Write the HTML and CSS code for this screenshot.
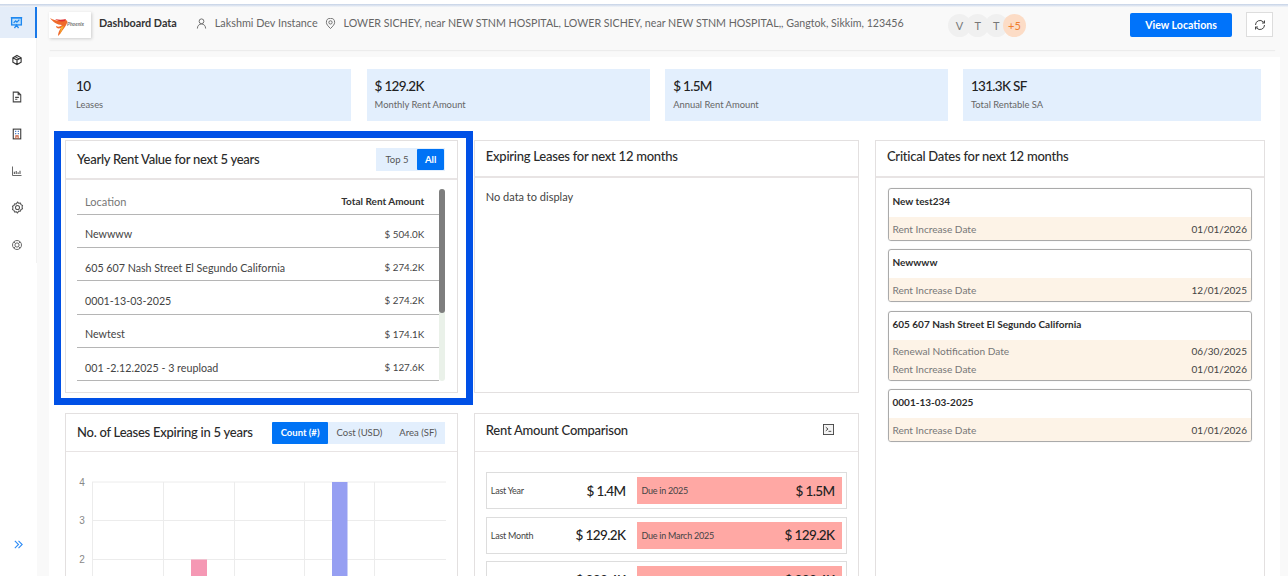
FILE: index.html
```html
<!DOCTYPE html>
<html lang="en">
<head>
<meta charset="utf-8">
<title>Dashboard Data</title>
<link rel="stylesheet" href="styles.css">
</head>
<body>
<div class="app">
  <nav class="sidebar">
    <div class="nav-list">
      <a class="nav-item active"><svg class="ico" viewBox="0 0 16 16" fill="none" stroke="#1e88f0" stroke-width="1.6"><path d="M1 2h14"/><rect x="2" y="2.5" width="12" height="8.5" fill="#bfe0fb"/><path d="M4.5 8.5l2.5-2.5 1.5 1.5 3-3M5.5 15l2.5-4 2.5 4"/></svg></a>
      <a class="nav-item"><svg class="ico" viewBox="0 0 16 16" fill="none" stroke="#333" stroke-width="1.5"><path d="M8 2l5.5 3v6L8 14l-5.5-3V5zM2.5 5L8 8l5.5-3M8 8v6"/><path d="M5.2 3.5l5.6 3" /></svg></a>
      <a class="nav-item"><svg class="ico" viewBox="0 0 16 16" fill="none" stroke="#444" stroke-width="1.4"><path d="M3 1.5h6.5l3.5 3.5v9.500H3zM9.500 1.500V5H13M5.500 8.500h5M5.500 11h3"/></svg></a>
      <a class="nav-item"><svg class="ico" viewBox="0 0 16 16" fill="none" stroke="#333" stroke-width="1.4"><rect x="3" y="1.500" width="10" height="13"/><path d="M5.500 4.500h1.500M9 4.500h1.500M5.500 7.500h1.500M9 7.500h1.500" stroke="#3a6fc0"/><path d="M6.500 14.500v-4h3v4" stroke="#c05a3a"/></svg></a>
      <a class="nav-item"><svg class="ico" viewBox="0 0 16 16" fill="none" stroke="#666" stroke-width="1.300"><path d="M2 2v12h12"/><path d="M4.500 12V9M7 12V8M9.500 12V9.500M12 12V7.500" stroke-width="1.600"/></svg></a>
      <a class="nav-item"><svg class="ico gear" viewBox="0 0 16 16" fill="none" stroke="#555" stroke-width="1.300" stroke-linejoin="round"><path d="M8 1.200l1.500 1.600 2.100-.3.700 2 1.900 1-.6 2 .6 2-1.900 1-.7 2-2.100-.3L8 14.800l-1.500-1.600-2.100.3-.7-2-1.900-1 .6-2-.6-2 1.900-1 .7-2 2.100.3z"/><circle cx="8" cy="8" r="2.500"/></svg></a>
      <a class="nav-item"><svg class="ico" viewBox="0 0 16 16" fill="none" stroke="#666" stroke-width="1.300"><circle cx="8" cy="8" r="6"/><circle cx="8" cy="8" r="2.800"/><path d="M3.800 3.800l2.200 2.200M12.200 3.800L10 6M3.800 12.200L6 10M12.200 12.200L10 10"/></svg></a>
    </div>
    <a class="nav-expand"><svg viewBox="0 0 12 12" fill="none" stroke="#2f8cf5" stroke-width="1.200"><path d="M2 2l4 4-4 4M6 2l4 4-4 4"/></svg></a>
  </nav>

  <div class="main">
    <header class="topbar">
      <div class="logo"><svg viewBox="0 0 42 26"><path d="M1 6c5 3 9 3 15 2 2 0 3 1 2 3-1 3-3 5-5 8-1 2-2 3-4 5 0-3 1-5 3-8-3 1-5 0-5-2 2 1 4 1 6-1-5 0-9-3-12-7z" fill="#ef6a2a"/><path d="M6 7c4 1 7 1 11 0l-1 2c-4 1-7 0-10-2z" fill="#e0312f"/><path d="M12 15l3-1-4 8z" fill="#f5b52e"/><text x="18" y="14" class="logo-text">Phoenix</text></svg></div>
      <h1 class="page-title">Dashboard Data</h1>
      <svg class="meta-ico first" viewBox="0 0 12 12" fill="none" stroke="#666" stroke-width="1"><circle cx="6" cy="3.600" r="2.600"/><path d="M1.500 11.500c0-3 2-5 4.500-5s4.500 2 4.500 5"/></svg>
      <span class="meta-text">Lakshmi Dev Instance</span>
      <svg class="meta-ico second" viewBox="0 0 12 12" fill="none" stroke="#666" stroke-width="1"><path d="M6 11.500C3.500 9 1.500 7 1.500 4.800a4.500 4.500 0 0 1 9 0C10.500 7 8.500 9 6 11.500z"/><circle cx="6" cy="4.800" r="1.800"/></svg>
      <span class="meta-text address">LOWER SICHEY, near NEW STNM HOSPITAL, LOWER SICHEY, near NEW STNM HOSPITAL,, Gangtok, Sikkim, 123456</span>
      <div class="avatars">
        <span class="avatar">V</span><span class="avatar">T</span><span class="avatar">T</span><span class="avatar more">+5</span>
      </div>
      <button class="primary-btn">View Locations</button>
      <button class="refresh-btn"><svg viewBox="0 0 12 12" fill="none" stroke="#444" stroke-width="1"><path d="M1.500 6a4.500 4.500 0 0 1 7.700-3.200L10.500 4M10.500 6a4.500 4.500 0 0 1-7.700 3.200L1.500 8"/><path d="M10.500 1.500V4H8M1.500 10.500V8H4"/></svg></button>
    </header>

    <section class="panel">
      <div class="kpis">
        <div class="kpi"><strong>10</strong><span>Leases</span></div>
        <div class="kpi"><strong>$ 129.2K</strong><span>Monthly Rent Amount</span></div>
        <div class="kpi"><strong>$ 1.5M</strong><span>Annual Rent Amount</span></div>
        <div class="kpi"><strong>131.3K SF</strong><span>Total Rentable SA</span></div>
      </div>

      <div class="grid">
        <article class="card rent-card">
          <div class="card-head tall">
            <h2>Yearly Rent Value for next 5 years</h2>
            <div class="toggle small"><span>Top 5</span><span class="on">All</span></div>
          </div>
          <div class="rent-body">
            <div class="rent-table">
              <div class="rent-row head"><span>Location</span><b>Total Rent Amount</b></div>
              <div class="rent-row"><span>Newwww</span><em>$ 504.0K</em></div>
              <div class="rent-row"><span>605 607 Nash Street El Segundo California</span><em>$ 274.2K</em></div>
              <div class="rent-row"><span>0001-13-03-2025</span><em>$ 274.2K</em></div>
              <div class="rent-row"><span>Newtest</span><em>$ 174.1K</em></div>
              <div class="rent-row"><span>001 -2.12.2025 - 3 reupload</span><em>$ 127.6K</em></div>
            </div>
            <div class="scroll"><div class="thumb"></div></div>
          </div>
        </article>

        <article class="card expiring-card">
          <div class="card-head raised"><h2>Expiring Leases for next 12 months</h2></div>
          <p class="empty">No data to display</p>
        </article>

        <article class="card dates-card">
          <div class="card-head raised"><h2>Critical Dates for next 12 months</h2></div>
          <div class="dates">
            <div class="date-item">
              <h3>New test234</h3>
              <div class="date-band"><div class="date-line"><span>Rent Increase Date</span><time>01/01/2026</time></div></div>
            </div>
            <div class="date-item">
              <h3>Newwww</h3>
              <div class="date-band"><div class="date-line"><span>Rent Increase Date</span><time>12/01/2025</time></div></div>
            </div>
            <div class="date-item">
              <h3>605 607 Nash Street El Segundo California</h3>
              <div class="date-band"><div class="date-line"><span>Renewal Notification Date</span><time>06/30/2025</time></div><div class="date-line"><span>Rent Increase Date</span><time>01/01/2026</time></div></div>
            </div>
            <div class="date-item">
              <h3>0001-13-03-2025</h3>
              <div class="date-band"><div class="date-line"><span>Rent Increase Date</span><time>01/01/2026</time></div></div>
            </div>
          </div>
        </article>

        <article class="card chart-card">
          <div class="card-head tall2">
            <h2>No. of Leases Expiring in 5 years</h2>
            <div class="toggle"><span class="on">Count (#)</span><span>Cost (USD)</span><span>Area (SF)</span></div>
          </div>
          <svg class="chart" viewBox="0 0 392 160" width="392" height="160">
            <g stroke="#ececec" stroke-width="1">
              <path d="M26 30H380M26 68.500H380M26 107.500H380M26 146H380"/>
              <path d="M26.500 30V160M97.500 30V160M168.500 30V160M238.500 30V160M308.500 30V160"/>
            </g>
            <rect x="125" y="107.500" width="16" height="53" fill="#f598b4"/>
            <rect x="266" y="30" width="15.500" height="130" fill="#969ff2"/>
            <g class="axis"><text x="16" y="34">4</text><text x="16" y="72">3</text><text x="16" y="111">2</text></g>
          </svg>
        </article>

        <article class="card compare-card">
          <div class="card-head tall3">
            <h2>Rent Amount Comparison</h2>
            <svg class="term" viewBox="0 0 12 12" fill="none" stroke="#444" stroke-width="1"><rect x=".5" y=".5" width="11" height="11" fill="#f4f4f4"/><path d="M3 3.500L5.500 5.500 3 7.500M6 8h3"/></svg>
          </div>
          <div class="compare-list">
            <div class="compare-row"><span class="cmp-label">Last Year</span><strong>$ 1.4M</strong><div class="due"><span>Due in 2025</span><strong>$ 1.5M</strong></div></div>
            <div class="compare-row"><span class="cmp-label">Last Month</span><strong>$ 129.2K</strong><div class="due"><span>Due in March 2025</span><strong>$ 129.2K</strong></div></div>
            <div class="compare-row"><span class="cmp-label">Last Week</span><strong>$ 333.4K</strong><div class="due"><span>Due this week</span><strong>$ 333.4K</strong></div></div>
          </div>
        </article>
      </div>
    </section>
  </div>
</div>
</body>
</html>
```
FILE: styles.css
```css
* { box-sizing: border-box; }
html, body { margin: 0; height: 576px; overflow: hidden; }
body { font-family: Lato, "Liberation Sans", sans-serif; background: #fff; color: #2b2b2b; }

.app { display: flex; height: 576px; padding-top: 4px; }
.app::before { content: ""; position: absolute; left: 0; right: 0; top: 4px; height: 3px; background: linear-gradient(#c5d2e6, #f3f5f9); z-index: 2; }

.sidebar { width: 37px; flex: none; background: #fff; display: flex; flex-direction: column; padding-top: 3px; position: relative; }
.nav-list { display: flex; flex-direction: column; border-right: 1px solid #f2f2f2; height: 256px; }
.nav-item { height: 37px; flex: none; display: flex; align-items: center; justify-content: center; padding-right: 2px; }
.nav-item.active { height: 31px; background: #e4edf9; border-right: 2px solid #1878e8; margin-right: -1px; margin-bottom: 3px; }
.ico { width: 12px; height: 12px; }
.ico.gear { width: 13px; height: 13px; }
.nav-item:first-child .ico { width: 13px; height: 13px; }
.nav-expand { margin-top: auto; margin-bottom: 25px; padding-left: 13px; height: 12px; display: block; }
.nav-expand svg { width: 11px; height: 11px; display: block; }

.main { flex: 1; min-width: 0; background: #f9f9f9; display: flex; flex-direction: column; padding-left: 12px; padding-right: 8px; }

.topbar { height: 46px; flex: none; display: flex; align-items: flex-start; padding-top: 8px; margin-right: 4px; box-shadow: 0 2px 1px -1px #ececec; background: #f9f9f9; position: relative; }
.logo { width: 42px; height: 26px; background: #fff; box-shadow: 1px 1px 3px #ccc; flex: none; }
.logo svg { display: block; width: 42px; height: 26px; }
.logo-text { font: italic 700 5px Lato, sans-serif; fill: #777; }
.page-title { margin: 3px 0 0 8px; font-size: 10.800px; line-height: 16px; font-weight: 700; color: #333; white-space: nowrap; }
.meta-ico { width: 11px; height: 11px; margin-top: 6px; flex: none; }
.meta-ico.first { margin-left: 19px; margin-right: 8px; }
.meta-ico.second { margin-left: 7px; margin-right: 8px; }
.meta-text { font-size: 10.800px; line-height: 16px; margin-top: 3px; color: #666; white-space: nowrap; }
.meta-text.address { font-size: 10.650px; }
.avatars { position: absolute; left: 899px; top: 10px; display: flex; }
.avatar { width: 23px; height: 23px; border-radius: 50%; background: #f0f0f0; color: #777; font-size: 11px; line-height: 23px; text-align: center; margin-right: -4.700px; }
.avatar.more { background: #fcdcc6; color: #ef7d2e; }
.primary-btn { position: absolute; left: 1081px; top: 9px; width: 102px; height: 24px; border: 0; border-radius: 2px; background: #0073fa; color: #fff; font: 700 10.600px Lato, sans-serif; padding: 0; }
.refresh-btn { position: absolute; left: 1197px; top: 8px; width: 27px; height: 25px; background: #fff; border: 1px solid #ddd; padding: 0; display: flex; align-items: center; justify-content: center; }
.refresh-btn svg { width: 12px; height: 12px; }

.panel { flex: 1; background: #fff; padding: 12px 16px 0 16px; margin-top: 7px; min-height: 0; overflow: hidden; }

.kpis { display: grid; grid-template-columns: 283.300px 283.300px 282.500px 298px; column-gap: 15.300px; padding-left: 3px; }
.kpi { height: 52px; background: #e3effd; padding: 9px 8px 0; display: flex; flex-direction: column; }
.kpi strong { font-size: 13.500px; line-height: 17px; font-weight: 500; letter-spacing: -.7px; color: #222; }
.kpi span { font-size: 9.400px; line-height: 12px; margin-top: 4px; color: #666; }

.grid { display: grid; grid-template-columns: 393.300px 385.700px 390px; grid-template-rows: 253px 300px; column-gap: 15.500px; row-gap: 20px; margin-top: 19px; }

.card { background: #fff; border: 1px solid #e3e0e0; min-height: 0; position: relative; }
.rent-card { grid-column: 1; grid-row: 1; }
.expiring-card { grid-column: 2; grid-row: 1; }
.dates-card { grid-column: 3; grid-row: 1 / span 2; }
.chart-card { grid-column: 1; grid-row: 2; }
.compare-card { grid-column: 2; grid-row: 2; }

.card-head { display: flex; align-items: center; justify-content: space-between; height: 37px; padding: 0 12px 0 11px; border-bottom: 1px solid #e8e4e4; }
.card-head.raised { padding-bottom: 6px; border-bottom-width: 2px; }
.card-head.tall { height: 39px; border-bottom-width: 2px; }
.card-head.tall h2, .card-head.tall2 h2 { margin-bottom: 2px; }
.card-head.tall2 { height: 38px; }
.card-head.tall3 { height: 38px; padding-right: 24px; padding-bottom: 6px; }
.card-head h2 { margin: 0; font-size: 13px; font-weight: 500; color: #2a2a2a; letter-spacing: -.25px; white-space: nowrap; }
.term { width: 11px; height: 11px; }

.rent-card::after { content: ""; position: absolute; left: -12px; top: -10px; right: -16px; bottom: -13px; border: 7px solid #0050e6; pointer-events: none; }

.toggle { display: flex; background: #e3effd; font-size: 9.500px; color: #555; height: 22px; line-height: 22px; }
.toggle span { padding: 0 8.500px; white-space: nowrap; }
.toggle .on { background: #0073f5; color: #fff; font-weight: 700; border-radius: 1px; }
.toggle.small { height: 23px; padding: 1px; line-height: 21px; }
.toggle.small .on { padding: 0 8px; }

.rent-body { display: flex; padding: 9px 12px 0 11px; }
.rent-table { flex: 1; }
.rent-row { display: flex; justify-content: space-between; align-items: center; height: 33.400px; padding: 6px 15px 0 8px; border-bottom: 1px solid #b5b5b5; font-size: 10.700px; color: #444; }
.rent-row.head { height: 25.500px; padding-top: 0; font-size: 11px; }
.rent-row.head span { color: #777; }
.rent-row.head b { font-size: 10px; color: #333; }
.rent-row em { font-style: normal; font-size: 9.800px; color: #444; }
.scroll { width: 6px; height: 192px; background: #eaf1e9; flex: none; border-radius: 3px; }
.thumb { height: 124px; background: #7e7e7e; border-radius: 3px; }

.empty { margin: 12px 11px; font-size: 11px; color: #444; }

.dates { padding: 10px 12px; display: flex; flex-direction: column; gap: 8.500px; }
.date-item { border: 1px solid #aaa; border-radius: 3px; overflow: hidden; box-shadow: 0 0 1px #ccc; }
.date-item h3 { margin: 0; height: 28px; padding: 0 3.500px; font-size: 10px; line-height: 24px; font-weight: 700; color: #2c2c2c; white-space: nowrap; }
.date-band { background: #fdf3e7; padding: 3px 4px 2.500px 3.500px; }
.date-line { display: flex; justify-content: space-between; align-items: center; height: 17.300px; font-size: 10.100px; color: #777; }
.date-line time { font-size: 10px; color: #444; }

.chart { display: block; }
.axis text { font: 10px "Liberation Sans", sans-serif; fill: #888; text-anchor: middle; }

.compare-list { padding: 20px 11px; display: flex; flex-direction: column; gap: 7.500px; }
.compare-row { display: flex; align-items: center; height: 37px; flex: none; border: 1px solid #ddd; padding: 4px; }
.cmp-label { width: 60px; font-size: 9px; letter-spacing: -.25px; color: #444; }
.compare-row > strong { flex: 1; text-align: right; font-size: 13.500px; letter-spacing: -.6px; font-weight: 500; padding-right: 12px; color: #222; }
.due { width: 205px; height: 27px; background: #ffa8a4; display: flex; align-items: center; justify-content: space-between; padding: 0 8px 0 4px; flex: none; }
.due span { font-size: 9px; letter-spacing: -.25px; color: #444; }
.due strong { font-size: 13.500px; letter-spacing: -.6px; font-weight: 500; color: #222; }
```
